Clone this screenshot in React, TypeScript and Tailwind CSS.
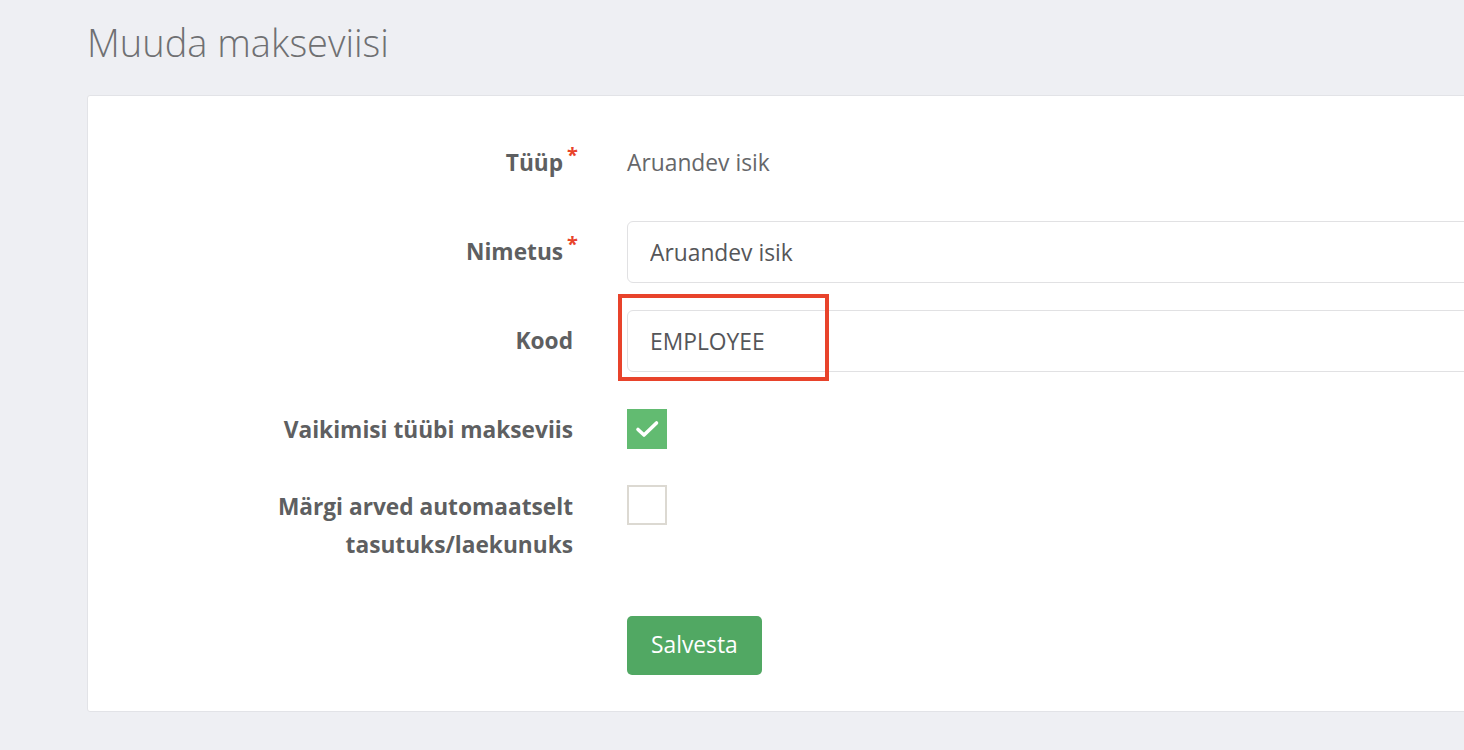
import React, { useState } from 'react';

const labelCls = "w-[485px] shrink-0 text-right font-bold text-[22.7px] leading-[38px] text-[#5e5f61]";

const Required = () => (
    <span className="relative -top-[9px] ml-[4px] -mr-[5px] text-[20px] leading-none text-[#e8432b]">*</span>
);

const EditPaymentMethod = () => {
    const [name, setName] = useState('Aruandev isik');
    const [code, setCode] = useState('EMPLOYEE');
    const [isDefault, setIsDefault] = useState(true);
    const [autoPaid, setAutoPaid] = useState(false);

    return (
        <div className="h-[750px] w-full overflow-hidden bg-[#eeeff3] pl-[87px] font-['Open_Sans',sans-serif]">
            <h1 className="pt-[14px] text-[38px] font-light leading-[56px] text-[#6f7072]">Muuda makseviisi</h1>

            <div className="mt-[25px] w-[1420px] rounded-[3px] border border-[#e2e3e7] bg-white pt-[36px] pb-[36px]">
                {/* Tüüp */}
                <div className="mb-[27px] flex h-[62px] items-center">
                    <div className={labelCls}>Tüüp<Required /></div>
                    <div className="ml-[54px] text-[22.8px] text-[#66676a]">Aruandev isik</div>
                </div>

                {/* Nimetus */}
                <div className="mb-[27px] flex h-[62px] items-center">
                    <div className={labelCls}>Nimetus<Required /></div>
                    <input
                        value={name}
                        onChange={e => setName(e.target.value)}
                        className="ml-[54px] h-[62px] flex-1 rounded-[6px] border border-[#e1e1e3] bg-white px-[22px] text-[22.8px] text-[#555659] outline-none"
                    />
                </div>

                {/* Kood */}
                <div className="mb-[27px] flex h-[62px] items-center">
                    <div className={labelCls}>Kood</div>
                    <div className="relative ml-[54px] flex flex-1">
                        <input
                            value={code}
                            onChange={e => setCode(e.target.value)}
                            className="h-[62px] w-full rounded-[6px] border border-[#e1e1e3] bg-white px-[22px] text-[22.8px] text-[#555659] outline-none"
                        />
                        <div className="pointer-events-none absolute -top-[16px] -left-[9px] h-[87px] w-[211px] border-[4px] border-[#e8432b]"></div>
                    </div>
                </div>

                {/* Vaikimisi */}
                <div className="mb-[27px] flex h-[62px] items-center">
                    <div className={labelCls}>Vaikimisi tüübi makseviis</div>
                    <button
                        onClick={() => setIsDefault(!isDefault)}
                        className={`ml-[54px] -mt-[3px] flex h-[40px] w-[40px] items-center justify-center ${isDefault ? 'bg-[#62bb71]' : 'border-2 border-[#dcd9d2] bg-white'}`}
                    >
                        {isDefault && (
                            <svg width="40" height="40" viewBox="0 0 40 40" fill="none">
                                <path d="M11 20.5L17 26L29.5 14" stroke="white" strokeWidth="3.6" strokeLinecap="round" strokeLinejoin="round" />
                            </svg>
                        )}
                    </button>
                </div>

                {/* Märgi */}
                <div className="flex items-start">
                    <div className={labelCls}>Märgi arved automaatselt<br />tasutuks/laekunuks</div>
                    <button
                        onClick={() => setAutoPaid(!autoPaid)}
                        className={`ml-[54px] -mt-[3px] flex h-[40px] w-[40px] items-center justify-center ${autoPaid ? 'bg-[#62bb71]' : 'border-2 border-[#dcd9d2] bg-white'}`}
                    >
                        {autoPaid && (
                            <svg width="40" height="40" viewBox="0 0 40 40" fill="none">
                                <path d="M11 20.5L17 26L29.5 14" stroke="white" strokeWidth="3.6" strokeLinecap="round" strokeLinejoin="round" />
                            </svg>
                        )}
                    </button>
                </div>

                <div className="mt-[52px] flex">
                    <div className="w-[485px] shrink-0"></div>
                    <button className="ml-[54px] h-[59px] rounded-[5px] bg-[#51a863] px-[24px] text-[22.8px] text-white">
                        Salvesta
                    </button>
                </div>
            </div>
        </div>
    );
};

export default EditPaymentMethod;
